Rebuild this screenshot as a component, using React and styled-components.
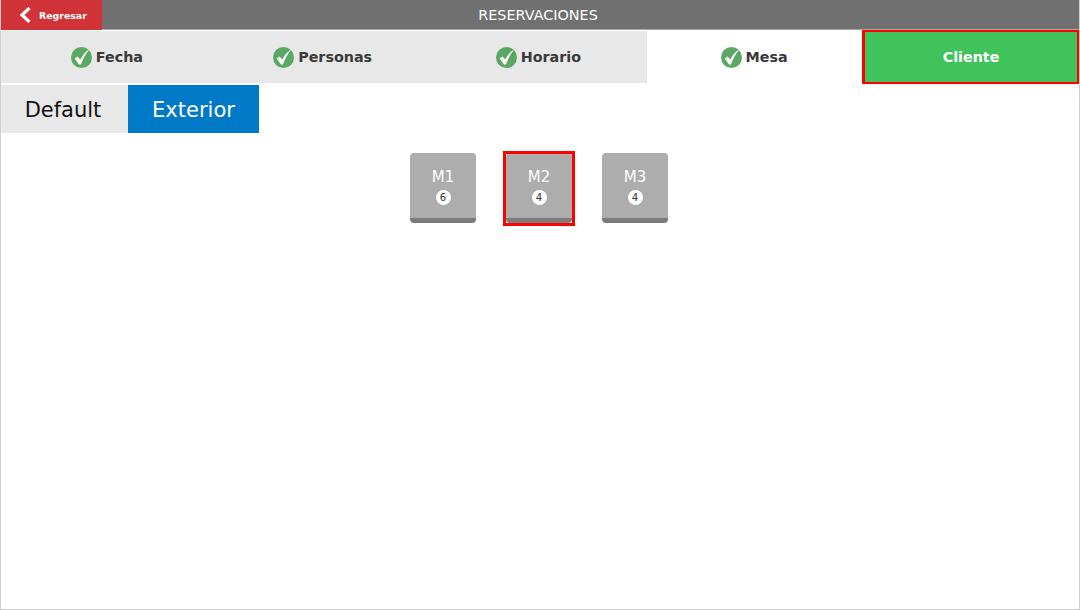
import React from 'react';
import styled, { createGlobalStyle } from 'styled-components';

const GlobalStyle = createGlobalStyle`
  html, body {
    margin: 0;
    padding: 0;
    background: #fff;
  }
`;

const Screen = styled.div`
  box-sizing: border-box;
  width: 1080px;
  height: 610px;
  display: flex;
  flex-direction: column;
  overflow: hidden;
  background: #fff;
  border: 1px solid #cfcfcf;
  border-top: 0;
  font-family: 'DejaVu Sans', sans-serif;
`;

const TopBar = styled.header`
  position: relative;
  height: 30px;
  margin: 0 -1px;
  padding: 1px 4px 0 0;
  flex: none;
  background: #707070;
  border-bottom: 1px solid #a8a8a8;
  box-sizing: border-box;
  display: flex;
  align-items: center;
  justify-content: center;
`;

const Title = styled.div`
  color: #fff;
  font-size: 14.4px;
`;

const BackButton = styled.button`
  position: absolute;
  left: 0;
  top: 0;
  width: 102px;
  height: 30px;
  padding: 0 0 0 19px;
  border: 0;
  background: #d13339;
  color: #fff;
  display: flex;
  align-items: center;
  gap: 8px;
  font-family: inherit;
  font-size: 9.4px;
  font-weight: 700;
`;

const Steps = styled.nav`
  display: grid;
  grid-template-columns: repeat(4, 215.75px) 1fr;
  height: 52px;
  margin: 1px -1px 0;
  flex: none;
`;

const Step = styled.div`
  display: flex;
  align-items: center;
  justify-content: center;
  gap: 4px;
  box-sizing: border-box;
  padding-right: ${p => (p.$done ? 2 : 0)}px;
  font-size: 14.3px;
  font-weight: 700;
  color: ${p => (p.$done ? '#3a3a3a' : '#fff')};
  background: ${p => (p.$done ? (p.$active ? '#fff' : '#e8e8e8') : '#3fc35a')};
  ${p => p.$selected && `
    border-style: solid;
    border-color: #ff0000;
    border-width: 2px 3px;
    margin: -1px 0 -1px -1px;
  `}
`;

const Tabs = styled.div`
  display: flex;
  margin-top: 2px;
  height: 48px;
  flex: none;
`;

const Tab = styled.div`
  box-sizing: border-box;
  width: ${p => p.$width}px;
  padding: 2px ${p => (p.$active ? 0 : 3)}px 0 0;
  display: flex;
  align-items: center;
  justify-content: center;
  font-size: 21px;
  color: ${p => (p.$active ? '#fff' : '#111')};
  background: ${p => (p.$active ? '#0079c6' : '#e8e8e8')};
`;

const Tables = styled.div`
  display: flex;
  justify-content: center;
  align-items: center;
  gap: 24px;
  margin-top: 18px;
  padding-right: 2px;
`;

const TableFrame = styled.div`
  box-sizing: border-box;
  padding: 2px 3px 3px;
  outline: ${p => (p.$selected ? '3px solid #ff0000' : 'none')};
  outline-offset: -3px;
`;

const Table = styled.div`
  box-sizing: border-box;
  width: 66px;
  height: 70px;
  border-radius: 4px;
  background: #adadad;
  border-bottom: 5px solid #7c7c7c;
  display: flex;
  flex-direction: column;
  align-items: center;
  padding-top: 16px;
  gap: 5px;
`;

const TableName = styled.div`
  color: #fff;
  font-size: 15px;
  line-height: 16px;
`;

const Seats = styled.div`
  width: 15px;
  height: 15px;
  border-radius: 50%;
  background: #fff;
  color: #333;
  font-size: 10px;
  line-height: 15px;
  text-align: center;
`;

const CheckIcon = () => (
  <svg width="21" height="21" viewBox="0 0 21 21" aria-hidden="true">
    <circle cx="10.5" cy="10.5" r="10.5" fill="#5aa863" />
    <path d="M3.7 11.5 L6.5 9.5 L9.3 12.5 C11.5 8.5 14.5 4.5 19 1.8 C15 6 12 11.5 10 17.5 L8 17.5 Z" fill="#fff" />
  </svg>
);

const ChevronIcon = () => (
  <svg width="12" height="16" viewBox="0 0 12 16" aria-hidden="true">
    <path d="M10.5 1 L3 8 L10.5 15" fill="none" stroke="#fff" strokeWidth="3.2" />
  </svg>
);

const steps = [
  { label: 'Fecha', done: true },
  { label: 'Personas', done: true },
  { label: 'Horario', done: true },
  { label: 'Mesa', done: true, active: true },
  { label: 'Cliente', selected: true },
];

const tables = [
  { name: 'M1', seats: 6 },
  { name: 'M2', seats: 4, selected: true },
  { name: 'M3', seats: 4 },
];

export default function App() {
  return (
    <Screen>
      <GlobalStyle />
      <TopBar>
        <BackButton>
          <ChevronIcon />
          Regresar
        </BackButton>
        <Title>RESERVACIONES</Title>
      </TopBar>

      <Steps>
        {steps.map(step => (
          <Step key={step.label} $done={step.done} $active={step.active} $selected={step.selected}>
            {step.done && <CheckIcon />}
            <span>{step.label}</span>
          </Step>
        ))}
      </Steps>

      <Tabs>
        <Tab $width={127}>Default</Tab>
        <Tab $width={131} $active>Exterior</Tab>
      </Tabs>

      <Tables>
        {tables.map(table => (
          <TableFrame key={table.name} $selected={table.selected}>
            <Table>
              <TableName>{table.name}</TableName>
              <Seats>{table.seats}</Seats>
            </Table>
          </TableFrame>
        ))}
      </Tables>
    </Screen>
  );
}
